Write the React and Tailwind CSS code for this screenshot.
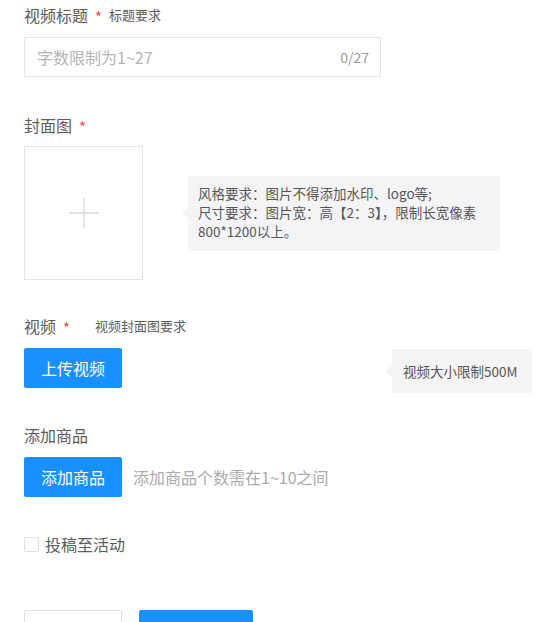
import React from "react";

const Star = () => <span className="text-[#f5484a] text-[15px] leading-none mx-[7px] mt-[2px]">*</span>;

const Tip = ({ children, className }) => (
   <div className={"relative bg-[#f4f4f6] text-[#555] " + className}>
      <span className="absolute left-[-6px] top-1/2 -translate-y-1/2 w-0 h-0 border-y-[6px] border-y-transparent border-r-[6px] border-r-[#f4f4f6]"></span>
      {children}
   </div>
);

const App = () => {
   return (
      <div className="w-[541px] h-[622px] overflow-hidden bg-white px-[24px] pt-[5px] text-[#5c5c5c] font-['Noto_Sans_CJK_SC','Noto_Sans',sans-serif]">
         <div className="flex items-center h-[20px]">
            <span className="text-[16px]">视频标题</span>
            <Star />
            <span className="text-[13px]">标题要求</span>
         </div>
         <div className="mt-[12px] w-[357px] h-[40px] border border-[#e6e6e8] flex items-center justify-between pl-[12px] pr-[11px] text-[16px] text-[#b5b5b5]">
            <span>字数限制为1~27</span>
            <span className="text-[14px] text-[#999]">0/27</span>
         </div>

         <div className="mt-[38px] flex items-center h-[20px]">
            <span className="text-[16px]">封面图</span>
            <Star />
         </div>
         <div className="mt-[11px] flex items-center">
            <div className="w-[119px] h-[134px] border border-[#e6e6e8] flex items-center justify-center">
               <svg width="32" height="32" viewBox="0 0 32 32">
                  <path d="M16 1v30M1 16h30" stroke="#d8d8d8" strokeWidth="1.3" />
               </svg>
            </div>
            <Tip className="ml-[45px] w-[312px] h-[75px] pl-[10px] pt-[8px] text-[13.5px] leading-[19px]">
               <div>风格要求：图片不得添加水印、logo等;</div>
               <div>尺寸要求：图片宽：高【2：3】，限制长宽像素</div>
               <div>800*1200以上。</div>
            </Tip>
         </div>

         <div className="mt-[36px] flex items-center h-[20px]">
            <span className="text-[16px]">视频</span>
            <Star />
            <span className="ml-[18px] text-[13px]">视频封面图要求</span>
         </div>
         <div className="mt-[12px] flex items-start justify-between">
            <button className="w-[98px] h-[40px] rounded-[2px] bg-[#1890ff] text-white text-[16px]">上传视频</button>
            <Tip className="mt-[1px] mr-[-15px] w-[140px] h-[44px] flex items-center pl-[11px] text-[13.5px]">
               视频大小限制500M
            </Tip>
         </div>

         <div className="mt-[32px] h-[20px] flex items-center text-[16px]">添加商品</div>
         <div className="mt-[12px] flex items-center">
            <button className="w-[98px] h-[40px] rounded-[2px] bg-[#1890ff] text-white text-[16px]">添加商品</button>
            <span className="ml-[11px] text-[16px] text-[#aaa]">添加商品个数需在1~10之间</span>
         </div>

         <div className="mt-[39px] flex items-center h-[16px]">
            <span className="w-[15px] h-[15px] border border-[#e0e0e0] rounded-[2px] bg-white"></span>
            <span className="ml-[6px] text-[16px]">投稿至活动</span>
         </div>

         <div className="mt-[58px] flex items-start">
            <button className="w-[98px] h-[40px] rounded-[2px] border border-[#e0e0e0] bg-white text-[16px] text-[#555]">取消</button>
            <button className="ml-[17px] w-[114px] h-[40px] rounded-[2px] bg-[#1890ff] text-white text-[16px]">发布</button>
         </div>
      </div>
   );
};

export default App;
